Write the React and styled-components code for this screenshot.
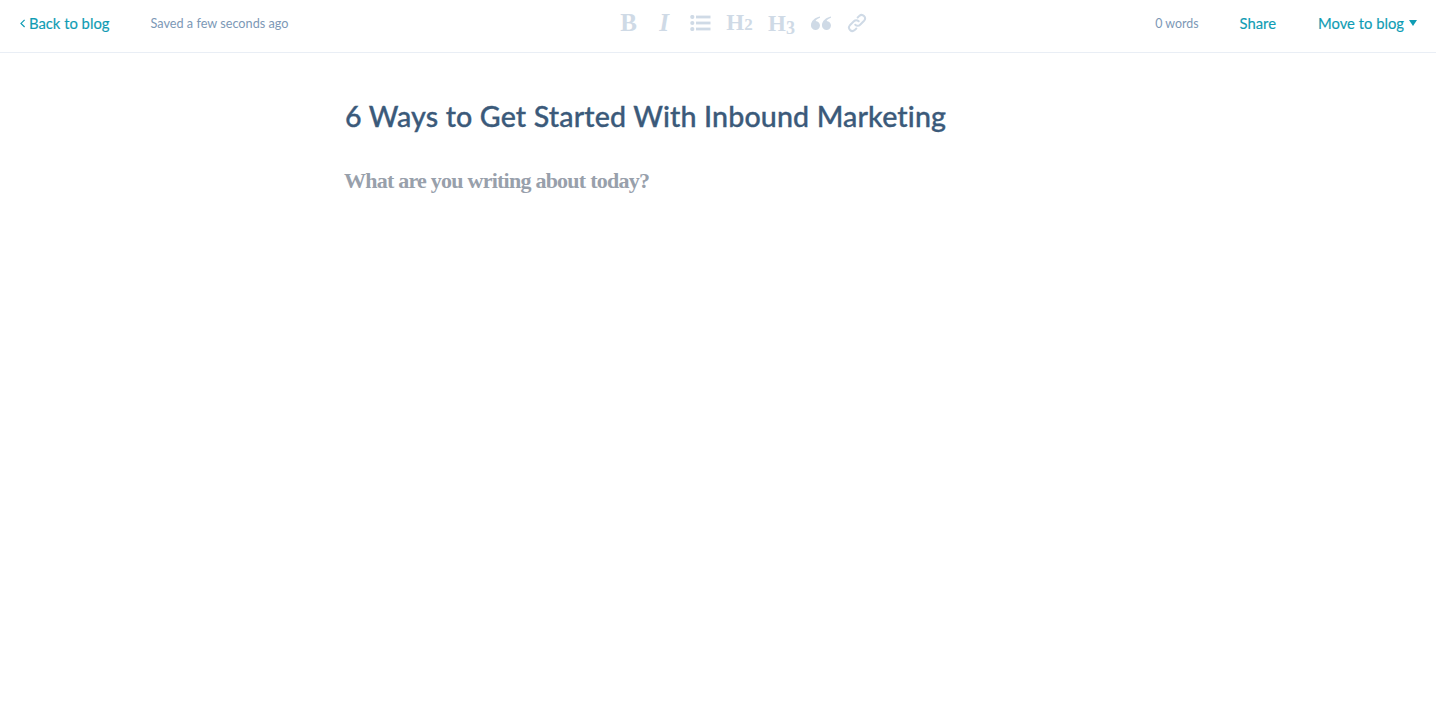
import React from "react";
import styled, { createGlobalStyle } from "styled-components";

const Global = createGlobalStyle`
  html, body { margin: 0; padding: 0; background: #fff; }
  body { font-family: Lato, "Open Sans", sans-serif; font-variant-ligatures: none; }
`;
const Page = styled.div`
  width: 1436px; height: 726px; display: flex; flex-direction: column; overflow: hidden;
`;
const Bar = styled.header`
  flex: none; box-sizing: border-box; height: 53px; border-bottom: 1px solid #e9eef5;
  display: grid; grid-template-columns: 1fr auto 1fr; align-items: center;
  padding: 0 19px 6px 20px;
`;
const Left = styled.div`display: flex; align-items: center; gap: 41px;`;
const Right = styled.div`display: flex; align-items: center; justify-content: flex-end;`;
const LinkText = styled.a`
  font-size: 14.8px; color: #0f9cb4; display: inline-flex; align-items: center; gap: ${p => p.$gap || 0}px;
  text-decoration: none; font-weight: 400; margin-left: ${p => p.$ml || 0}px; -webkit-text-stroke: 0.15px #0f9cb4;
`;
const Status = styled.span`font-size: ${p => p.$size || 12.7}px; color: #7c98b6;`;
const Tools = styled.div`display: flex; align-items: center; color: #cfdae6; margin-left: 50px;`;
const Tool = styled.span`
  display: inline-flex; align-items: center; justify-content: center; height: 24px;
  width: ${p => p.$w}px; margin-right: ${p => p.$mr || 0}px; padding-top: ${p => p.$down || 0}px;
`;
const Glyph = styled.span`
  font-family: "Liberation Serif", serif; font-weight: 700; font-size: ${p => p.$size || 24}px; line-height: 24px;
  font-style: ${p => p.$italic ? "italic" : "normal"}; display: inline-flex; align-items: baseline;
  color: #cfdae6; white-space: nowrap;
`;
const Sub = styled.span`font-size: ${p => p.$size || 17}px; position: relative; top: ${p => p.$drop || 0}px;`;
const Main = styled.main`flex: 1; padding: 43px 0 0 345px;`;
const Title = styled.h1`
  margin: 0; font-family: Lato, sans-serif; font-weight: 500; font-size: 28.6px; line-height: 40px; color: #3b5a7a;
  -webkit-text-stroke: 0.35px #3b5a7a; letter-spacing: 0.14px;
`;
const Placeholder = styled.p`
  margin: 30px 0 0 -1px; font-family: "Liberation Serif", serif; font-weight: 700; font-size: 22px; line-height: 30px; color: #98a0ab;
  letter-spacing: -0.76px;
`;

const Chevron = () => (
  <svg width="6" height="9" viewBox="0 0 6 9" fill="none" stroke="#0f9cb4" strokeWidth="1.2"><path d="M4.6 .8 1 4.4l3.6 3.6" /></svg>
);
const Caret = () => (
  <svg width="8" height="6" viewBox="0 0 8 6" fill="#0f9cb4"><path d="M0 0h8L4 6z" /></svg>
);
const ListIcon = () => (
  <svg width="21" height="16" viewBox="0 0 21 16" fill="#cfdae6">
    <circle cx="2.3" cy="2" r="2.1" /><circle cx="2.3" cy="8" r="2.1" /><circle cx="2.3" cy="14" r="2.1" />
    <rect x="6" y=".6" width="14.500" height="2.800" /><rect x="6" y="6.600" width="14.500" height="2.800" /><rect x="6" y="12.600" width="14.500" height="2.800" />
  </svg>
);
const QuoteIcon = () => (
  <svg width="20" height="14" viewBox="0 0 20 14" fill="#cfdae6">
    <path d="M9 .5C4 1.500 0 5 0 9a4.500 4.500 0 1 0 4.600-4c.5-1.300 2-2.600 4.400-3.300z" />
    <path d="M20 .5C15 1.500 11 5 11 9a4.500 4.500 0 1 0 4.600-4c.5-1.300 2-2.600 4.400-3.300z" />
  </svg>
);
const LinkIcon = () => (
  <svg width="20" height="20" viewBox="0 0 20 20" fill="none" stroke="#cfdae6" strokeWidth="2" strokeLinecap="round">
    <path d="M8.300 11.700a3.400 3.400 0 0 0 4.800 0l4-4a3.400 3.400 0 0 0-4.800-4.800l-1.600 1.600" />
    <path d="M11.700 8.300a3.400 3.400 0 0 0-4.800 0l-4 4a3.400 3.400 0 0 0 4.800 4.800l1.600-1.600" />
  </svg>
);

export default function App() {
  return (
    <Page>
      <Global />
      <Bar>
        <Left>
          <LinkText href="#" $gap={3}><Chevron />Back to blog</LinkText>
          <Status>Saved a few seconds ago</Status>
        </Left>
        <Tools>
          <Tool $w={17} $mr={22}><Glyph $size={25}>B</Glyph></Tool>
          <Tool $w={10} $mr={21}><Glyph $size={25} $italic>I</Glyph></Tool>
          <Tool $w={21} $mr={15}><ListIcon /></Tool>
          <Tool $w={27} $mr={15} $down={2}><Glyph $size={23}>H<Sub>2</Sub></Glyph></Tool>
          <Tool $w={27} $mr={16} $down={2}><Glyph $size={23}>H<Sub $size={18} $drop={3}>3</Sub></Glyph></Tool>
          <Tool $w={20} $mr={16}><QuoteIcon /></Tool>
          <Tool $w={20}><LinkIcon /></Tool>
        </Tools>
        <Right>
          <Status $size={12.4}>0 words</Status>
          <LinkText href="#" $ml={41}>Share</LinkText>
          <LinkText href="#" $ml={42} $gap={5}>Move to blog <Caret /></LinkText>
        </Right>
      </Bar>
      <Main>
        <Title>6 Ways to Get Started With Inbound Marketing</Title>
        <Placeholder>What are you writing about today?</Placeholder>
      </Main>
    </Page>
  );
}
